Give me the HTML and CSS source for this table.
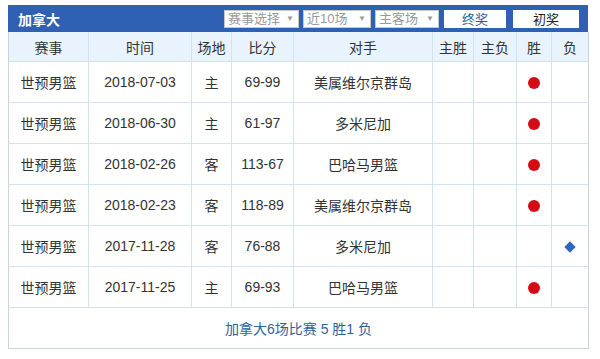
FILE: index.html
```html
<!DOCTYPE html>
<html>
<head>
<meta charset="utf-8">
<link rel="stylesheet" href="styles.css">
</head>
<body>
<div class="panel">
  <div class="bar">
    <div class="title">加拿大</div>
    <div class="tools">
      <div class="sel s1">赛事选择<span class="arr">▼</span></div>
      <div class="sel s2">近10场<span class="arr">▼</span></div>
      <div class="sel s3">主客场<span class="arr">▼</span></div>
      <div class="btn b1">终奖</div>
      <div class="btn b2">初奖</div>
    </div>
  </div>
  <table class="grid">
    <colgroup>
      <col class="c1"><col class="c2"><col class="c3"><col class="c4"><col class="c5"><col class="c6"><col class="c7"><col class="c8"><col class="c9">
    </colgroup>
    <thead>
      <tr><th>赛事</th><th>时间</th><th>场地</th><th>比分</th><th>对手</th><th>主胜</th><th>主负</th><th>胜</th><th>负</th></tr>
    </thead>
    <tbody>
      <tr><td>世预男篮</td><td>2018-07-03</td><td>主</td><td>69-99</td><td>美属维尔京群岛</td><td></td><td></td><td><span class="dot"></span></td><td></td></tr>
      <tr><td>世预男篮</td><td>2018-06-30</td><td>主</td><td>61-97</td><td>多米尼加</td><td></td><td></td><td><span class="dot"></span></td><td></td></tr>
      <tr><td>世预男篮</td><td>2018-02-26</td><td>客</td><td>113-67</td><td>巴哈马男篮</td><td></td><td></td><td><span class="dot"></span></td><td></td></tr>
      <tr><td>世预男篮</td><td>2018-02-23</td><td>客</td><td>118-89</td><td>美属维尔京群岛</td><td></td><td></td><td><span class="dot"></span></td><td></td></tr>
      <tr><td>世预男篮</td><td>2017-11-28</td><td>客</td><td>76-88</td><td>多米尼加</td><td></td><td></td><td></td><td><span class="dia"></span></td></tr>
      <tr><td>世预男篮</td><td>2017-11-25</td><td>主</td><td>69-93</td><td>巴哈马男篮</td><td></td><td></td><td><span class="dot"></span></td><td></td></tr>
      <tr class="sum"><td colspan="9">加拿大6场比赛 5 胜1 负</td></tr>
    </tbody>
  </table>
</div>
</body>
</html>
```
FILE: styles.css
```css
html, body {
  margin: 0;
  padding: 0;
  background: #fff;
}
body {
  padding: 5px 8px 0 8px;
  font-family: "Liberation Sans", Arial, "Noto Sans CJK SC", sans-serif;
  color: #333;
}
.panel {
  width: 580px;
}
.bar {
  height: 27px;
  background: #2f60b4;
  display: flex;
  align-items: center;
  justify-content: space-between;
  padding: 0 9px 0 10px;
}
.title {
  color: #fff;
  font-weight: bold;
  font-size: 14px;
  font-family: "Noto Sans CJK SC", sans-serif;
}
.tools {
  display: flex;
  align-items: center;
  gap: 4px;
  padding-top: 1px;
}
.sel {
  box-sizing: border-box;
  height: 18px;
  background: #fff;
  border: 1px solid #c8c8c8;
  color: #999;
  font-size: 13px;
  line-height: 16px;
  padding: 0 0 0 3px;
  display: flex;
  align-items: center;
  justify-content: space-between;
  font-family: "Liberation Sans", "Noto Sans CJK SC", sans-serif;
}
.arr {
  font-size: 8px;
  color: #999;
  padding-right: 4px;
}
.s1 { width: 75px; }
.s2 { width: 68px; }
.s3 { width: 64px; }
.btn {
  box-sizing: border-box;
  height: 18px;
  background: #fff;
  font-size: 13px;
  line-height: 18px;
  text-align: center;
  font-family: "Noto Sans CJK SC", sans-serif;
}
.b1 { width: 62px; color: #2f5aa0; margin-left: 1px; }
.b2 { width: 66px; color: #222; margin-left: 3px; }
.grid {
  width: 580px;
  border-collapse: collapse;
  table-layout: fixed;
  font-size: 14px;
  font-family: "Liberation Sans", Arial, "Noto Sans CJK SC", sans-serif;
}
.c1 { width: 80px; }
.c2 { width: 103px; }
.c3 { width: 40px; }
.c4 { width: 62px; }
.c5 { width: 139px; }
.c6 { width: 41px; }
.c7 { width: 43px; }
.c8 { width: 35px; }
.c9 { width: 37px; }
.grid th {
  height: 29px;
  background: #e8f3fd;
  font-weight: normal;
  color: #333;
  border-left: 1px solid #d2e2ef;
  border-right: 1px solid #d2e2ef;
  padding: 0;
  font-family: "Noto Sans CJK SC", sans-serif;
  font-size: 14px;
}
.grid th:first-child { border-left: 1px solid #c9d3dc; }
.grid th:last-child { border-right: 1px solid #c9d3dc; }
.grid td {
  height: 40px;
  border: 1px solid #d2e2ef;
  text-align: center;
  padding: 0;
  color: #333;
}
.grid td:first-child { border-left: 1px solid #c9d3dc; }
.grid td:last-child { border-right: 1px solid #c9d3dc; }
.dot {
  display: inline-block;
  width: 12px;
  height: 12px;
  border-radius: 50%;
  background: #d40a14;
  vertical-align: middle;
}
.dia {
  display: inline-block;
  width: 8px;
  height: 8px;
  background: #2f64c0;
  transform: rotate(45deg);
  vertical-align: middle;
}
.sum td {
  height: 40px;
  color: #2f5f9e;
  font-size: 14px;
  border: 1px solid #c9d3dc;
  border-top: 1px solid #d2e2ef;
}
```
